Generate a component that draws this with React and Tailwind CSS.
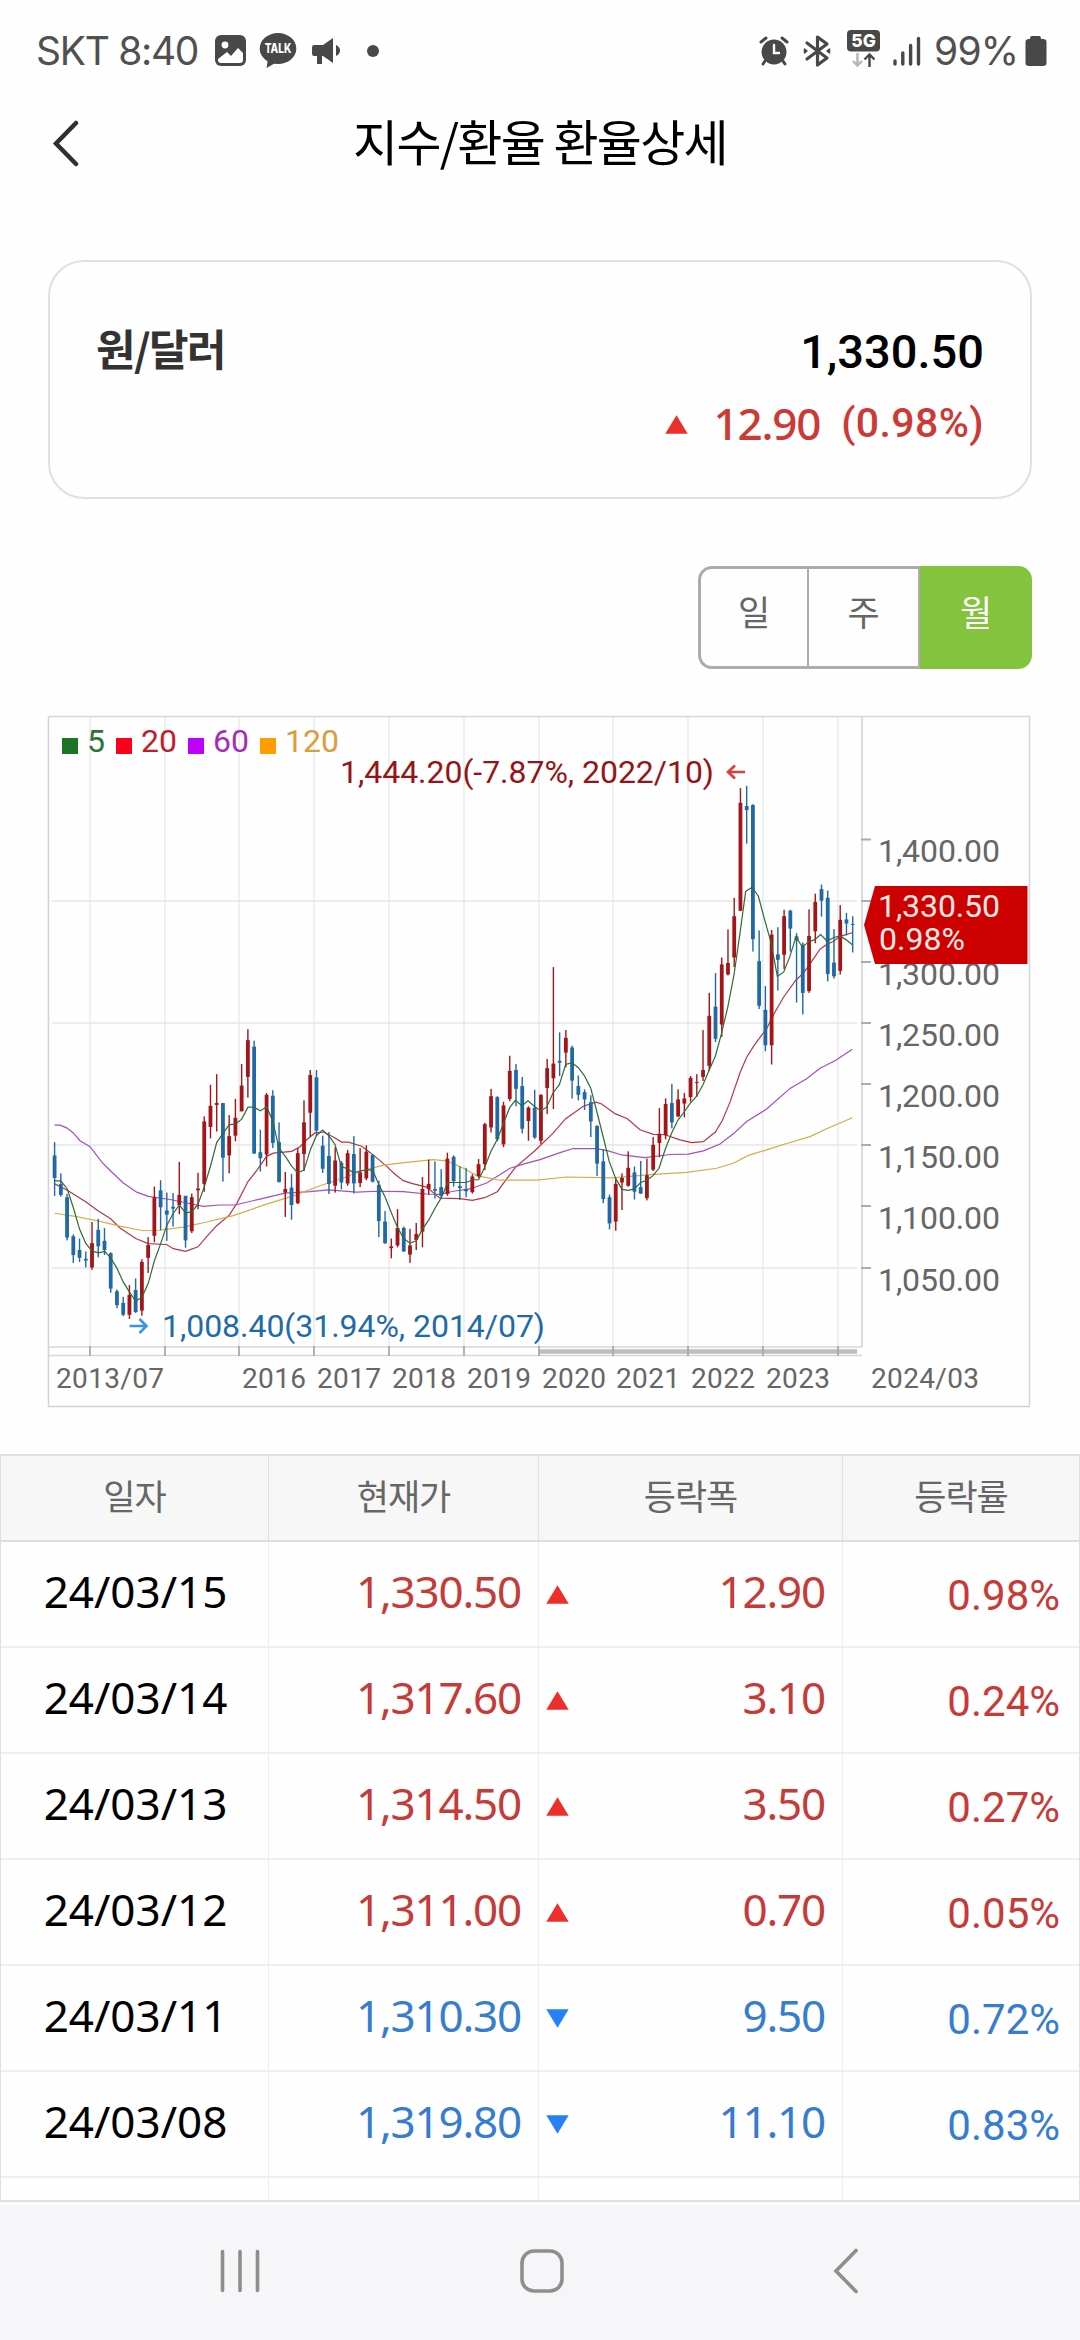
// src/App.jsx
import React from "react";

// [high, low, bodyTop, bodyBottom, rising], one entry per month
const candles = [
  [965, 1082, 994, 1043, 0], [1033, 1084, 1056, 1080, 0], [1078, 1179, 1085, 1173, 0],
  [1166, 1228, 1170, 1211, 0], [1175, 1226, 1200, 1217, 0], [1203, 1238, 1219, 1223, 0],
  [1139, 1243, 1185, 1238, 1], [1132, 1216, 1156, 1192, 0], [1152, 1211, 1180, 1200, 0],
  [1205, 1293, 1207, 1284, 0], [1286, 1327, 1290, 1320, 0], [1302, 1344, 1315, 1341, 0],
  [1276, 1350, 1298, 1341, 1], [1262, 1337, 1287, 1335, 0], [1220, 1343, 1226, 1332, 1],
  [1172, 1250, 1189, 1217, 1], [1062, 1183, 1085, 1169, 1], [1048, 1157, 1070, 1107, 0],
  [1075, 1180, 1114, 1123, 0], [1076, 1149, 1106, 1110, 0], [1008, 1122, 1080, 1102, 1],
  [1082, 1195, 1082, 1179, 0], [1077, 1163, 1085, 1159, 1], [1032, 1111, 1066, 1070, 1],
  [909, 1073, 920, 1056, 1], [840, 957, 886, 932, 1], [817, 942, 880, 884, 1],
  [880, 1051, 880, 999, 0], [906, 1033, 952, 994, 1], [871, 963, 912, 951, 1],
  [795, 898, 842, 898, 1], [719, 868, 743, 823, 1], [744, 990, 757, 990, 0],
  [938, 1029, 987, 1000, 0], [858, 1018, 862, 992, 1], [852, 978, 864, 967, 0],
  [922, 1053, 965, 1052, 0], [1030, 1128, 1067, 1075, 1], [1034, 1134, 1064, 1102, 0],
  [978, 1100, 989, 1098, 1], [874, 1028, 922, 991, 1], [808, 953, 819, 901, 1],
  [808, 951, 824, 940, 0], [951, 1032, 973, 1023, 0], [943, 1078, 995, 1056, 0],
  [976, 1075, 1005, 1060, 1], [1006, 1068, 1010, 1053, 0], [982, 1060, 989, 1055, 1],
  [952, 1077, 991, 1055, 0], [978, 1063, 1031, 1054, 1], [972, 1048, 986, 1044, 1],
  [991, 1053, 993, 1051, 0], [1049, 1172, 1058, 1137, 0], [1115, 1187, 1138, 1185, 0],
  [1175, 1218, 1192, 1196, 1], [1111, 1194, 1152, 1190, 1], [1149, 1204, 1152, 1203, 0],
  [1154, 1228, 1190, 1210, 1], [1141, 1200, 1165, 1178, 1], [1041, 1194, 1067, 1160, 1],
  [1003, 1080, 1056, 1067, 1], [1007, 1088, 1067, 1071, 0], [1024, 1089, 1063, 1082, 0],
  [988, 1082, 1001, 1078, 1], [994, 1062, 997, 1050, 0], [1018, 1091, 1061, 1065, 0],
  [1021, 1085, 1067, 1072, 0], [1035, 1077, 1040, 1074, 1], [1002, 1043, 1013, 1039, 1],
  [923, 1026, 926, 1013, 1], [849, 944, 865, 933, 1], [865, 963, 867, 959, 0],
  [877, 976, 885, 970, 1], [777, 876, 810, 871, 1], [795, 887, 808, 849, 0],
  [823, 946, 843, 936, 0], [887, 962, 890, 919, 1], [851, 958, 890, 955, 0],
  [861, 969, 862, 962, 1], [784, 904, 804, 847, 1], [584, 893, 794, 826, 1],
  [726, 821, 788, 792, 0], [721, 802, 738, 770, 1], [755, 870, 759, 831, 0],
  [820, 874, 843, 862, 0], [850, 895, 856, 872, 0], [863, 954, 878, 920, 0],
  [928, 1039, 930, 1012, 0], [980, 1098, 1007, 1089, 0], [1079, 1155, 1085, 1142, 0],
  [1045, 1158, 1056, 1138, 1], [1033, 1113, 1043, 1053, 1], [985, 1062, 1021, 1060, 1],
  [1018, 1090, 1031, 1073, 0], [1006, 1078, 1063, 1077, 0], [1001, 1092, 1037, 1087, 1],
  [954, 1028, 971, 1025, 1], [891, 998, 947, 967, 1], [870, 959, 882, 950, 1],
  [838, 935, 880, 922, 0], [850, 910, 872, 909, 1], [858, 911, 870, 881, 1],
  [821, 877, 825, 867, 1], [817, 866, 834, 836, 1], [721, 832, 808, 823, 1],
  [640, 810, 690, 799, 1], [597, 747, 670, 740, 0], [563, 736, 578, 709, 1],
  [502, 602, 575, 600, 1], [433, 584, 473, 563, 1], [194, 462, 226, 461, 1],
  [189, 315, 233, 242, 0], [229, 550, 231, 523, 0], [504, 675, 571, 668, 0],
  [625, 767, 677, 754, 0], [503, 796, 513, 754, 1], [497, 635, 556, 568, 0],
  [459, 588, 473, 557, 1], [459, 550, 461, 500, 0], [510, 661, 517, 526, 0],
  [530, 687, 535, 640, 0], [458, 640, 516, 636, 1], [424, 532, 442, 506, 1],
  [404, 474, 414, 439, 0], [417, 615, 433, 599, 0], [501, 609, 574, 604, 0],
  [449, 600, 481, 592, 1], [466, 515, 480, 489, 0], [473, 552, 490, 492, 0],
];

const averages = [
  {
    period: 5,
    text: "#2b7436",
    box: "#1b7523",
    line: "#2f6b38",
    points: [
      [44, 1049], [63, 1050], [82, 1067], [100, 1108], [119, 1155], [137, 1185], [156, 1202],
      [175, 1206], [194, 1203], [212, 1217], [231, 1240], [250, 1270], [268, 1291], [287, 1311],
      [306, 1303], [325, 1272], [343, 1224], [362, 1186], [380, 1147], [399, 1121], [418, 1102],
      [437, 1119], [455, 1117], [474, 1100], [493, 1062], [512, 1016], [530, 966], [549, 946],
      [568, 927], [586, 926], [605, 915], [624, 889], [642, 889], [661, 897], [680, 888],
      [698, 919], [717, 978], [736, 996], [754, 1016], [773, 1032], [792, 1026], [811, 982],
      [829, 951], [848, 939], [866, 951], [885, 970], [904, 1018], [922, 1023], [941, 1032],
      [960, 1028], [979, 1025], [998, 1026], [1016, 1057], [1035, 1084], [1054, 1119],
      [1072, 1150], [1091, 1175], [1110, 1185], [1129, 1180], [1147, 1155], [1166, 1135],
      [1185, 1109], [1204, 1086], [1223, 1053], [1260, 1053], [1279, 1053], [1297, 1047],
      [1316, 1047], [1334, 1020], [1353, 985], [1372, 959], [1390, 925], [1409, 890],
      [1426, 874], [1446, 886], [1464, 875], [1483, 887], [1502, 897], [1520, 889],
      [1539, 858], [1558, 840], [1577, 796], [1596, 792], [1615, 803], [1633, 820],
      [1652, 847], [1671, 900], [1690, 955], [1708, 1008], [1727, 1044], [1746, 1068],
      [1765, 1070], [1783, 1067], [1802, 1053], [1821, 1048], [1839, 1038], [1857, 1022],
      [1876, 980], [1895, 945], [1914, 917], [1932, 900], [1951, 880], [1970, 865],
      [1989, 840], [2007, 809], [2026, 778], [2044, 730], [2063, 672], [2082, 601],
      [2100, 510], [2117, 419], [2136, 410], [2155, 429], [2174, 481], [2193, 530],
      [2212, 604], [2231, 595], [2250, 560], [2268, 518], [2287, 540], [2306, 529],
      [2324, 524], [2342, 513], [2361, 527], [2380, 520], [2399, 516], [2418, 524], [2437, 535],
    ],
  },
  {
    period: 20,
    text: "#c11c2a",
    box: "#fb0018",
    line: "#b3374a",
    points: [
      [44, 1056], [82, 1070], [137, 1095], [175, 1115], [212, 1132], [240, 1152], [287, 1175],
      [325, 1186], [380, 1188], [400, 1197], [437, 1203], [474, 1193], [500, 1171], [530, 1147],
      [568, 1124], [590, 1099], [624, 1051], [650, 1027], [680, 996], [700, 989], [755, 985],
      [780, 975], [800, 960], [825, 945], [850, 943], [880, 954], [905, 965], [925, 965],
      [965, 974], [985, 985], [1015, 1002], [1045, 1021], [1065, 1035], [1090, 1049],
      [1115, 1055], [1160, 1063], [1200, 1087], [1260, 1088], [1297, 1092], [1334, 1086],
      [1372, 1073], [1395, 1050], [1426, 1020], [1483, 985], [1540, 945], [1577, 914],
      [1630, 887], [1668, 878], [1685, 882], [1725, 903], [1762, 914], [1800, 938],
      [1840, 948], [1875, 949], [1920, 960], [1955, 966], [1990, 964], [2026, 943],
      [2047, 918], [2070, 878], [2100, 814], [2120, 780], [2140, 757], [2165, 732],
      [2180, 718], [2200, 688], [2230, 650], [2268, 612], [2290, 597], [2310, 577],
      [2340, 545], [2361, 534], [2380, 528], [2400, 517], [2437, 509],
    ],
  },
  {
    period: 60,
    text: "#a52bb8",
    box: "#c000ff",
    line: "#a34fbd",
    points: [
      [44, 928], [60, 928], [80, 934], [100, 945], [120, 962], [150, 975], [185, 1008],
      [212, 1028], [250, 1054], [290, 1074], [325, 1083], [390, 1090], [430, 1096],
      [490, 1105], [540, 1102], [585, 1102], [660, 1089], [735, 1076], [810, 1073],
      [865, 1069], [950, 1074], [1010, 1072], [1090, 1073], [1160, 1078], [1200, 1079],
      [1240, 1072], [1290, 1067], [1340, 1054], [1410, 1022], [1450, 1013], [1500, 1003],
      [1560, 988], [1600, 979], [1670, 979], [1705, 984], [1745, 993], [1815, 999],
      [1890, 992], [1945, 991], [1990, 984], [2040, 969], [2080, 947], [2120, 920],
      [2180, 893], [2250, 848], [2300, 827], [2340, 804], [2385, 788], [2437, 763],
    ],
  },
  {
    period: 120,
    text: "#dc9c37",
    box: "#ff9c00",
    line: "#d8ab47",
    points: [
      [44, 1120], [100, 1126], [170, 1136], [240, 1148], [310, 1158], [360, 1157],
      [430, 1150], [500, 1139], [580, 1125], [680, 1100], [760, 1082], [840, 1060],
      [900, 1046], [960, 1029], [1030, 1015], [1100, 1009], [1180, 1003], [1220, 1006],
      [1270, 1022], [1310, 1038], [1380, 1048], [1490, 1048], [1580, 1041], [1720, 1043],
      [1830, 1036], [1940, 1031], [2030, 1022], [2080, 1011], [2125, 994], [2180, 982],
      [2240, 968], [2310, 953], [2360, 936], [2437, 912],
    ],
  },
];

const legend = [
  { box: 62, text: 87 },
  { box: 116, text: 141 },
  { box: 188, text: 213 },
  { box: 260, text: 285 },
];

const toX = (v) => 40 + v / 3;
const toY = (v) => 700 + v / 2.1778;
const candleX = (i) => 54.6 + i * 6.235;

const verticals = [90, 165, 239, 314, 389, 464, 539, 613, 688, 763, 838];
const horizontals = [902, 1024, 1146, 1269];
const priceLabels = [
  ["1,400.00", 840.5],
  ["1,300.00", 963],
  ["1,250.00", 1024],
  ["1,200.00", 1085],
  ["1,150.00", 1146],
  ["1,100.00", 1207],
  ["1,050.00", 1269],
];
const yearLabels = [
  ["2013/07", 56, 108],
  ["2016", 242, 64],
  ["2017", 317, 64],
  ["2018", 392, 64],
  ["2019", 467, 64],
  ["2020", 542, 64],
  ["2021", 616, 64],
  ["2022", 691, 64],
  ["2023", 766, 64],
  ["2024/03", 871, 108],
];

const rows = [
  { date: "24/03/15", price: "1,330.50", diff: "12.90", rate: "0.98%", up: true },
  { date: "24/03/14", price: "1,317.60", diff: "3.10", rate: "0.24%", up: true },
  { date: "24/03/13", price: "1,314.50", diff: "3.50", rate: "0.27%", up: true },
  { date: "24/03/12", price: "1,311.00", diff: "0.70", rate: "0.05%", up: true },
  { date: "24/03/11", price: "1,310.30", diff: "9.50", rate: "0.72%", up: false },
  { date: "24/03/08", price: "1,319.80", diff: "11.10", rate: "0.83%", up: false },
];

const Triangle = ({ up, className }) => (
  <svg width="23" height="19" viewBox="0 0 23 19" className={className}>
    <path d={up ? "M11.5 0.3 L22.7 18.7 H0.3 Z" : "M0.3 0.3 H22.7 L11.5 18.7 Z"} fill={up ? "#ec2f2b" : "#2681f7"} />
  </svg>
);

const StatusBar = () => (
  <div className="flex h-[102px] items-center justify-between pl-[36px] pr-[33px] font-['Inter',sans-serif] text-[39px] font-normal text-[#505050]">
    <div className="flex items-center">
      <span className="w-[162px] whitespace-nowrap tracking-[-1.3px]">SKT 8:40</span>
      <svg width="32" height="32" viewBox="0 0 32 32" className="ml-[17px]">
        <rect width="31" height="31" rx="6" fill="#484848" />
        <circle cx="10" cy="10" r="3.4" fill="#fff" />
        <path d="M3 24 L12 17 L16 21 L23 13 L28 18 V25 Q28 28 25 28 H6 Q3 28 3 25 Z" fill="#fff" />
      </svg>
      <svg width="38" height="38" viewBox="0 0 38 38" className="ml-[12px]">
        <ellipse cx="19" cy="16.5" rx="18.3" ry="15.5" fill="#484848" />
        <path d="M9 27 L7.5 36 L18 30 Z" fill="#484848" />
        <text x="5.7" y="21" fontSize="12.8" fontWeight="800" fill="#fff" textLength="26.6" lengthAdjust="spacingAndGlyphs">TALK</text>
      </svg>
      <svg width="30" height="28" viewBox="0 0 30 28" className="ml-[14px]" fill="#484848">
        <path d="M3 8 H12 L22 1 V26 L12 19 H11 V27 H6 V19 H3 Q1 19 1 16 V11 Q1 8 3 8 Z" />
        <path d="M25 8 Q29 10 29 13.500 Q29 17 25 19 Z" />
      </svg>
      <span className="ml-[26px] h-[12px] w-[12px] rounded-full bg-[#484848]" />
    </div>
    <div className="flex items-center">
      <svg width="30" height="30" viewBox="0 0 30 30" fill="none" stroke="#484848" strokeWidth="3" strokeLinecap="round">
        <circle cx="15" cy="16" r="12.500" fill="#484848" stroke="none" />
        <path d="M2 6 L7 2 M23 2 L28 6 M6 25 L4 28 M24 25 L26 28" />
        <path d="M15 9 V17 H20" stroke="#fff" strokeWidth="2.4" />
      </svg>
      <svg width="28" height="34" viewBox="0 0 28 34" className="ml-[14px]" fill="none" stroke="#484848" strokeWidth="3.200" strokeLinejoin="round" strokeLinecap="round">
        <path d="M4 9 L24 24 L14.500 31 V3 L24 10 L4 25" />
        <path d="M1.500 15 V19 L4 17 Z M26.500 15 V19 L24 17 Z" strokeWidth="1.500" fill="#484848" />
      </svg>
      <svg width="33" height="38" viewBox="0 0 33 38" className="-mt-[4px] ml-[16px]">
        <rect width="33" height="21.500" rx="4" fill="#484848" />
        <text x="4.300" y="17.300" fontSize="18" fontWeight="800" fill="#fff" textLength="24.500" lengthAdjust="spacingAndGlyphs">5G</text>
        <path d="M10.500 23 V35 M6 31 L10.500 35.500 L15 31" fill="none" stroke="#b5b5b5" strokeWidth="2.400" />
        <path d="M22.500 37 V25 M17.500 29.500 L22.500 24.500 L27.500 29.500" fill="none" stroke="#484848" strokeWidth="2.400" />
      </svg>
      <svg width="28" height="30" viewBox="0 0 28 30" className="ml-[13px]" stroke="#484848" strokeWidth="3.400" strokeLinecap="round">
        <path d="M2 25 V28 M9.800 17 V28 M17.600 9.500 V28 M25.500 2.500 V28" />
      </svg>
      <span className="ml-[13px] w-[87px] whitespace-nowrap tracking-[-0.8px]">99%</span>
      <svg width="22" height="32" viewBox="0 0 22 32" className="ml-[4px]" fill="#484848">
        <path d="M7 1 H14 Q16 1 16 4 H18 Q21.500 4 21.500 7 V28 Q21.500 31 18 31 H4 Q0.500 31 0.500 28 V7 Q0.500 4 4 4 H5 Q5 1 7 1 Z" />
      </svg>
    </div>
  </div>
);

const Header = () => (
  <header className="flex h-[84px] items-center">
    <svg width="28" height="48" viewBox="0 0 28 48" className="ml-[52px]">
      <path d="M24 3 L4 23.500 L24 44" fill="none" stroke="#303030" strokeWidth="4.500" strokeLinecap="round" />
    </svg>
    <h1 className="mr-[80px] flex-1 pb-[9px] text-center text-[49px] leading-none tracking-[-1.7px] text-black">
      지수/환율 환율상세
    </h1>
  </header>
);

const SummaryCard = () => (
  <section className="mx-[48px] mt-[74px] flex h-[239px] justify-between rounded-[36px] border-2 border-[#e0e0e0] px-[46px] pt-[59px]">
    <h2 className="text-[43px] font-bold leading-[52px] tracking-[-1.6px] text-[#333]">원/달러</h2>
    <div className="text-right">
      <p className="font-['Roboto',sans-serif] text-[47px] font-medium leading-[62px] text-black">1,330.50</p>
      <p className="mt-[9px] flex items-center justify-end text-[#cc3a36]">
        <Triangle up className="mt-[3px]" />
        <span className="ml-[26px] font-['Noto_Sans',sans-serif] text-[44px] font-medium leading-[62px] tracking-[-1.2px]">12.90</span>
        <span className="ml-[21px] font-['Roboto',sans-serif] text-[41px] font-medium leading-[62px] tracking-[0.4px]">(0.98%)</span>
      </p>
    </div>
  </section>
);

const PeriodTabs = () => (
  <div className="mr-[48px] mt-[67px] flex h-[103px] w-[334px] self-end text-[35px] text-[#666]">
    <button className="w-[111px] rounded-l-[14px] border-[3px] border-r-[2px] border-[#acacac] pb-[13px]">일</button>
    <button className="w-[111px] border-y-[3px] border-r-[2px] border-[#acacac] pb-[13px]">주</button>
    <button className="w-[112px] rounded-r-[14px] bg-[#84c33d] pb-[13px] text-white">월</button>
  </div>
);

const Chart = () => (
  <svg width="984" height="694" viewBox="47 716 984 694" className="ml-[47px] mt-[46px] font-['Roboto',sans-serif]">
    <path d="M48.500 717.500 V1407.500 H1030" fill="none" stroke="#d2d2d2" strokeWidth="1.500" />
    <path d="M48.500 717.500 H1029.500 V1407.500" fill="none" stroke="#d6d6d6" strokeWidth="1.500" />
    {verticals.map((x) => (
      <line key={x} x1={x} x2={x} y1="718" y2="1348" stroke="#ececec" strokeWidth="1.600" />
    ))}
    {horizontals.map((y) => (
      <line key={y} x1="52" x2="857" y1={y} y2={y} stroke="#e6e6e6" strokeWidth="1.600" />
    ))}
    <path d="M862 718 V1348" stroke="#d6d6d6" strokeWidth="1.800" />
    <path d="M49 1348 H862 M49 1356.500 H862" stroke="#d6d6d6" strokeWidth="1.600" />
    <path d="M539 1352.500 H857" stroke="#bebebe" strokeWidth="4.500" />
    {verticals.map((x) => (
      <line key={x} x1={x} x2={x} y1="1347" y2="1357" stroke="#aaa" strokeWidth="1.800" />
    ))}

    {averages.slice(1).map((a) => (
      <polyline key={a.period} points={a.points.map(([x, y]) => `${toX(x)},${toY(y)}`).join(" ")} fill="none" stroke={a.line} strokeWidth="1.200" />
    ))}
    {candles.map(([high, low, top, bottom, up], i) => (
      <g key={i} fill={up ? "#a31518" : "#2069a5"}>
        <rect x={candleX(i) - 0.7} y={toY(high)} width="1.400" height={(low - high) / 2.1778} />
        <rect x={candleX(i) - 1.9} y={toY(top)} width="3.800" height={(bottom - top) / 2.1778} />
      </g>
    ))}
    <polyline points={averages[0].points.map(([x, y]) => `${toX(x)},${toY(y)}`).join(" ")} fill="none" stroke={averages[0].line} strokeWidth="1.200" />

    {averages.map((a, i) => (
      <g key={a.period}>
        <rect x={legend[i].box} y="739" width="16" height="16" fill={a.box} />
        <text x={legend[i].text} y="753" fontSize="32" fill={a.text}>{a.period}</text>
      </g>
    ))}

    <text x="340" y="784" fontSize="32" fill="#961417" textLength="374">1,444.20(-7.87%, 2022/10)</text>
    <path d="M745 773 H728 M735 766.500 L728 773 L735 779.500" fill="none" stroke="#dc3c3c" strokeWidth="2.600" />
    <text x="162" y="1337.500" fontSize="32" fill="#1f6ba8" textLength="383">1,008.40(31.94%, 2014/07)</text>
    <path d="M129.500 1327 H146 M139.500 1320 L146.500 1327 L139.500 1334" fill="none" stroke="#3f92e6" strokeWidth="2.600" />

    {priceLabels.map(([label, y]) => (
      <g key={label}>
        <line x1="861" x2="871" y1={y} y2={y} stroke="#a8adb2" strokeWidth="2" />
        <text x="878" y={y + 22.500} fontSize="32" fill="#666" textLength="122">{label}</text>
      </g>
    ))}
    <line x1="861" x2="871" y1="902" y2="902" stroke="#a8adb2" strokeWidth="2" />
    <path d="M864 926 L875 887 H1027.500 V965 H875 Z" fill="#cd0000" />
    <text x="878" y="918" fontSize="32" fill="#ffe9e6" textLength="122">1,330.50</text>
    <text x="879" y="951" fontSize="32" fill="#ffe9e6" textLength="86">0.98%</text>

    {yearLabels.map(([label, x, width]) => (
      <text key={label} x={x} y="1389" fontSize="28" fill="#666" textLength={width}>{label}</text>
    ))}
  </svg>
);

const cols = "grid grid-cols-[268px_270px_304px_1fr]";

const PriceTable = () => (
  <section className="mt-[45px] h-[748px] overflow-hidden border-2 border-x border-[#e0e0e0]">
    <div className={`${cols} h-[86px] divide-x divide-[#e0e0e0] border-b-2 border-[#dedede] bg-[#f7f7f7] text-center text-[35px] leading-[78px] tracking-[-1px] text-[#666]`}>
      <span>일자</span>
      <span>현재가</span>
      <span>등락폭</span>
      <span>등락률</span>
    </div>
    {rows.map((row) => (
      <div
        key={row.date}
        className={`${cols} h-[106px] divide-x divide-[#eee] border-b-2 border-[#eee] font-['Noto_Sans',sans-serif] text-[44px] leading-[98px] ${row.up ? "text-[#c53b38]" : "text-[#377dce]"}`}
      >
        <span className="pl-[2px] text-center text-black">{row.date}</span>
        <span className="pr-[17px] text-right tracking-[-1.2px]">{row.price}</span>
        <span className="flex items-start justify-between pl-[7px] pr-[17px]">
          <Triangle up={row.up} className="mt-[43px] shrink-0" />
          <span className="tracking-[-1.2px]">{row.diff}</span>
        </span>
        <span className="pr-[19px] pt-[5px] text-right font-['Roboto',sans-serif] text-[42px]">{row.rate}</span>
      </div>
    ))}
    <div className={`${cols} h-[106px] divide-x divide-[#eee]`}>
      <span />
      <span />
      <span />
      <span />
    </div>
  </section>
);

const NavBar = () => (
  <nav className="mt-auto h-[135px] bg-[#f6f6f8]">
    <svg width="1080" height="135" viewBox="0 2205 1080 135" fill="none" stroke="#8e8e8e" strokeWidth="3.600" strokeLinecap="round">
      <path d="M222.500 2251.500 V2290.500 M240 2251.500 V2290.500 M257.500 2251.500 V2290.500" />
      <rect x="522" y="2251" width="40" height="40" rx="12" />
      <path d="M856 2250.500 L836 2271 L856 2291.500" />
    </svg>
  </nav>
);

const App = () => (
  <main className="flex h-[2340px] w-[1080px] flex-col overflow-hidden bg-[#fefefe] font-['Noto_Sans_CJK_KR',sans-serif]">
    <StatusBar />
    <Header />
    <SummaryCard />
    <PeriodTabs />
    <Chart />
    <PriceTable />
    <NavBar />
  </main>
);

export default App;
